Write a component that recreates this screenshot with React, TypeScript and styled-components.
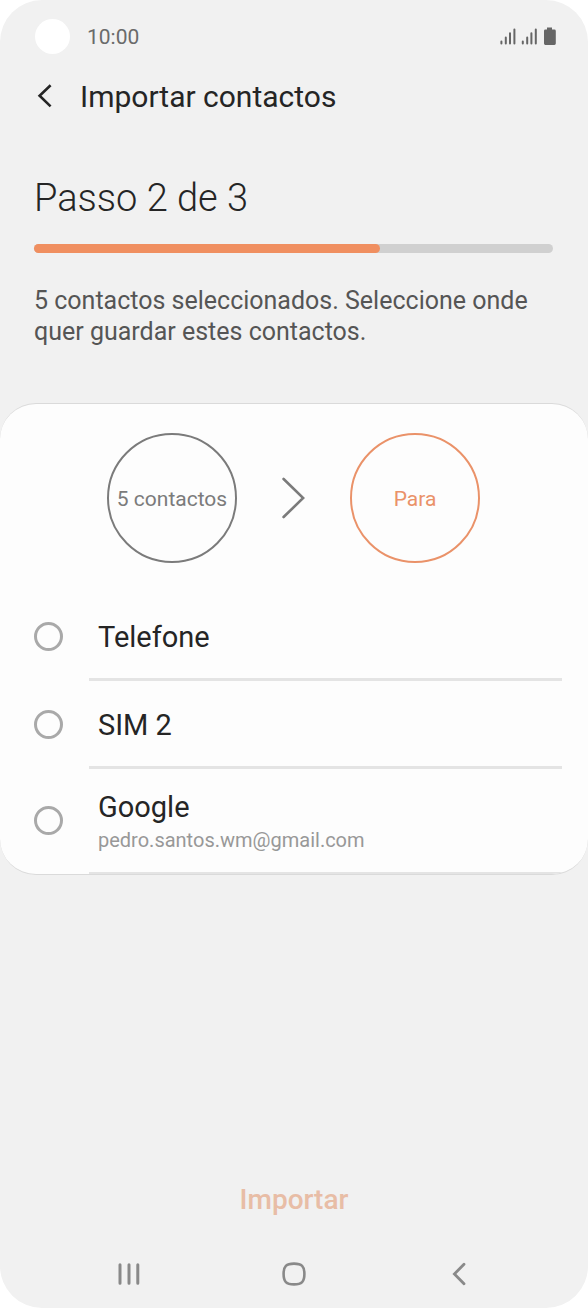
import React, { useState } from "react";
import styled, { createGlobalStyle } from "styled-components";

const color = {
  page: "#f1f1f1",
  card: "#fdfdfd",
  ink: "#252525",
  body: "#555555",
  muted: "#7b7b7b",
  faint: "#989898",
  line: "#e4e4e4",
  accent: "#f08f60",
};

const GlobalStyle = createGlobalStyle`
  *, *::before, *::after { box-sizing: border-box; }
  body {
    margin: 0;
    background: #ffffff;
    font-family: Roboto, "Liberation Sans", sans-serif;
  }
  h1, h2, p, ul { margin: 0; padding: 0; }
  button { border: 0; background: none; padding: 0; font: inherit; cursor: pointer; }
  svg { display: block; }
`;

const Screen = styled.div`
  display: flex;
  flex-direction: column;
  min-height: 100vh;
  border-radius: 42px;
  overflow: hidden;
  background: ${color.page};
`;

const StatusBar = styled.div`
  display: flex;
  align-items: center;
  height: 73px;
  padding: 0 32px 0 35px;
`;

const Camera = styled.span`
  width: 35px;
  height: 35px;
  border-radius: 50%;
  background: #ffffff;
`;

const Clock = styled.span`
  margin-left: 17px;
  font-size: 21px;
  line-height: 24px;
  color: #6a6a6a;
`;

const StatusIcons = styled.span`
  margin-left: auto;
`;

const TitleBar = styled.header`
  display: flex;
  align-items: center;
  height: 48px;
  padding: 0 35px;
`;

const BackButton = styled.button`
  display: flex;
  align-items: center;
  width: 45px;
  height: 48px;
`;

const Title = styled.h1`
  font-size: 30px;
  line-height: 36px;
  font-weight: 400;
  color: ${color.ink};
`;

const Intro = styled.section`
  padding: 53px 35px 56px 34px;
`;

const Step = styled.h2`
  font-size: 38px;
  line-height: 48px;
  font-weight: 300;
  color: ${color.ink};
`;

const Track = styled.div`
  height: 9px;
  margin-top: 22px;
  border-radius: 5px;
  background: #d0d0d0;
`;

const Fill = styled.div`
  height: 100%;
  border-radius: 5px;
  background: ${color.accent};
`;

const Message = styled.p`
  margin-top: 32px;
  font-size: 25px;
  line-height: 31px;
  color: ${color.body};
`;

const Card = styled.main`
  border: solid #dadada;
  border-width: 1px 0;
  border-radius: 36px;
  overflow: hidden;
  background: ${color.card};
`;

const Transfer = styled.div`
  display: flex;
  align-items: center;
  justify-content: center;
  gap: 45px;
  padding: 29px 1px 30px 0;
`;

const Bubble = styled.div<{ $tone: string }>`
  display: flex;
  align-items: center;
  justify-content: center;
  width: 130px;
  height: 130px;
  padding-top: 2px;
  border: 2px solid ${(p) => p.$tone};
  border-radius: 50%;
  font-size: 21px;
  line-height: 24px;
  white-space: nowrap;
  color: ${(p) => p.$tone};
`;

const Options = styled.ul`
  list-style: none;
`;

const Option = styled.label`
  display: flex;
  align-items: stretch;
  padding: 0 26px 0 34px;
  cursor: pointer;
`;

const Radio = styled.input`
  appearance: none;
  flex: none;
  align-self: center;
  width: 29px;
  height: 29px;
  margin: 0 26px 2px 0;
  border: 3px solid #a9a9a9;
  border-radius: 50%;

  &:checked {
    border-color: ${color.accent};
    background: radial-gradient(${color.accent} 50%, transparent 55%);
  }
`;

const OptionText = styled.span<{ $tall: boolean }>`
  display: flex;
  flex: 1;
  flex-direction: column;
  justify-content: center;
  min-height: ${(p) => (p.$tall ? 105 : 88)}px;
  padding: 2px 0 0 9px;
  border-bottom: ${(p) => (p.$tall ? 2 : 3)}px solid ${color.line};
`;

const OptionName = styled.span`
  font-size: 29px;
  line-height: 36px;
  color: ${color.ink};
`;

const OptionDetail = styled.span`
  font-size: 20px;
  line-height: 30px;
  color: ${color.faint};
`;

const Footer = styled.footer`
  display: flex;
  justify-content: center;
  margin-top: auto;
`;

const ImportButton = styled.button`
  height: 60px;
  padding: 0 24px;
  font-size: 28px;
  line-height: 36px;
  font-weight: 500;
  color: #e8bda6;
`;

const NavBar = styled.nav`
  display: grid;
  grid-template-columns: repeat(3, 28%);
  justify-content: center;
  height: 68px;
  margin-top: 10px;
`;

const NavButton = styled.button`
  display: flex;
  align-items: center;
  justify-content: center;
`;

const destinations = [
  { id: "phone", name: "Telefone" },
  { id: "sim2", name: "SIM 2" },
  { id: "google", name: "Google", detail: "pedro.santos.wm@gmail.com" },
];

const SignalAndBattery = () => (
  <svg width="56" height="20" viewBox="0 0 56 20" aria-hidden="true">
    <g stroke="#666666" strokeWidth="2" strokeLinecap="round">
      <path d="M1.4 14.6V16.6M5.8 10.4V16.6M10 6.2V16.6M14.4 2.4V16.6" />
      <path d="M22.8 14.6V16.6M27.2 10.4V16.6M31.4 6.2V16.6M35.8 2.4V16.6" />
    </g>
    <path
      d="M47 .6H52V2.6H54.4Q55.8 2.6 55.8 4V16.6Q55.8 18 54.4 18H45.4Q44 18 44 16.6V4Q44 2.6 45.4 2.6H47Z"
      fill="#666666"
    />
  </svg>
);

export default function App() {
  const [selected, setSelected] = useState("");
  const step = 2;
  const steps = 3;

  return (
    <>
      <GlobalStyle />
      <Screen>
        <StatusBar>
          <Camera />
          <Clock>10:00</Clock>
          <StatusIcons>
            <SignalAndBattery />
          </StatusIcons>
        </StatusBar>

        <TitleBar>
          <BackButton type="button" aria-label="Voltar">
            <svg width="20" height="26" viewBox="0 0 20 26" fill="none" stroke={color.ink} strokeWidth="2.6">
              <path d="M15.6 1.2 4.6 11.8 15.6 22.4" />
            </svg>
          </BackButton>
          <Title>Importar contactos</Title>
        </TitleBar>

        <Intro>
          <Step>Passo {step} de {steps}</Step>
          <Track role="progressbar" aria-label="Passo" aria-valuemin={0} aria-valuemax={steps} aria-valuenow={step}>
            <Fill style={{ width: `${(step / steps) * 100}%` }} />
          </Track>
          <Message>5 contactos seleccionados. Seleccione onde quer guardar estes contactos.</Message>
        </Intro>

        <Card>
          <Transfer>
            <Bubble $tone={color.muted}>5 contactos</Bubble>
            <svg
              width="23"
              height="42"
              viewBox="0 0 23 42"
              fill="none"
              stroke={color.muted}
              strokeWidth="2.6"
              strokeLinecap="round"
              aria-hidden="true"
            >
              <path d="M1.6 2 21.2 21 1.6 40" />
            </svg>
            <Bubble $tone="#ea9269">Para</Bubble>
          </Transfer>

          <Options>
            {destinations.map((d) => (
              <li key={d.id}>
                <Option htmlFor={d.id}>
                  <Radio
                    type="radio"
                    id={d.id}
                    name="destination"
                    checked={selected === d.id}
                    onChange={() => setSelected(d.id)}
                  />
                  <OptionText $tall={Boolean(d.detail)}>
                    <OptionName>{d.name}</OptionName>
                    {d.detail && <OptionDetail>{d.detail}</OptionDetail>}
                  </OptionText>
                </Option>
              </li>
            ))}
          </Options>
        </Card>

        <Footer>
          <ImportButton type="button">Importar</ImportButton>
        </Footer>

        <NavBar>
          <NavButton type="button" aria-label="Recentes">
            <svg width="22" height="24" viewBox="0 0 22 24" stroke="#898989" strokeWidth="3" strokeLinecap="round">
              <path d="M2 2.8V21.2M11 2.8V21.2M19.8 2.8V21.2" />
            </svg>
          </NavButton>
          <NavButton type="button" aria-label="Início">
            <svg width="24" height="24" viewBox="0 0 24 24" fill="none" stroke="#898989" strokeWidth="2.6">
              <path d="M12 1.6C19.8 1.6 22.4 4.2 22.4 12S19.8 22.4 12 22.4 1.6 19.8 1.6 12 4.2 1.6 12 1.6Z" />
            </svg>
          </NavButton>
          <NavButton type="button" aria-label="Anterior">
            <svg width="14" height="24" viewBox="0 0 14 24" fill="none" stroke="#898989" strokeWidth="2.8" strokeLinecap="round">
              <path d="M12 2.2 2.4 12 12 21.8" />
            </svg>
          </NavButton>
        </NavBar>
      </Screen>
    </>
  );
}
